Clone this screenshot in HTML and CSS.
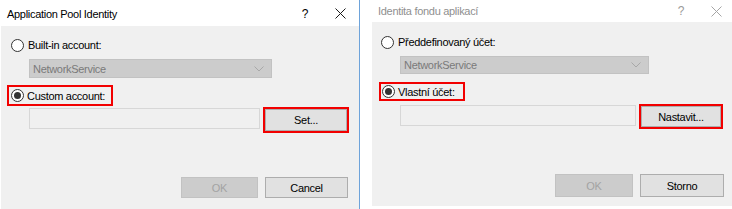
FILE: index.html
```html
<!DOCTYPE html>
<html lang="en">
<head>
<meta charset="utf-8">
<title>Application Pool Identity</title>
<link rel="stylesheet" href="styles.css">
</head>
<body>
<div class="screen">
  <section class="dialog dialog--en">
    <header class="titlebar">
      <span class="title">Application Pool Identity</span>
      <span class="help">?</span>
      <span class="close"><svg width="11" height="11" viewBox="0 0 11 11"><path d="M0.5 0.5 L10.5 10.5 M10.5 0.5 L0.5 10.5" /></svg></span>
    </header>
    <div class="body">
      <div class="option">
        <span class="radio"></span><span class="label">Built-in account:</span>
      </div>
      <div class="combo">
        <span class="combo-text">NetworkService</span>
        <svg class="chevron" width="10" height="6" viewBox="0 0 10 6"><path d="M0.5 0.5 L5 5 L9.5 0.5" /></svg>
      </div>
      <div class="option highlight">
        <span class="radio radio--checked"></span><span class="label">Custom account:</span>
      </div>
      <div class="account-row">
        <div class="textbox"></div>
        <div class="highlight highlight--btn"><button class="btn">Set...</button></div>
      </div>
      <div class="actions">
        <button class="btn btn--ok" disabled>OK</button>
        <button class="btn btn--cancel">Cancel</button>
      </div>
    </div>
  </section>
  <div class="divider"></div>
  <section class="dialog dialog--cs">
    <header class="titlebar">
      <span class="title">Identita fondu aplikací</span>
      <span class="help">?</span>
      <span class="close"><svg width="11" height="11" viewBox="0 0 11 11"><path d="M0.5 0.5 L10.5 10.5 M10.5 0.5 L0.5 10.5" /></svg></span>
    </header>
    <div class="body">
      <div class="option">
        <span class="radio"></span><span class="label">Předdefinovaný účet:</span>
      </div>
      <div class="combo">
        <span class="combo-text">NetworkService</span>
        <svg class="chevron" width="10" height="6" viewBox="0 0 10 6"><path d="M0.5 0.5 L5 5 L9.5 0.5" /></svg>
      </div>
      <div class="option highlight">
        <span class="radio radio--checked"></span><span class="label">Vlastní účet:</span>
      </div>
      <div class="account-row">
        <div class="textbox"></div>
        <div class="highlight highlight--btn"><button class="btn">Nastavit...</button></div>
      </div>
      <div class="actions">
        <button class="btn btn--ok" disabled>OK</button>
        <button class="btn btn--cancel">Storno</button>
      </div>
    </div>
  </section>
</div>
</body>
</html>
```

FILE: styles.css
```css
* { box-sizing: border-box; }

html, body {
  margin: 0;
  padding: 0;
  background: #ffffff;
}

body {
  font-family: "Liberation Sans", Arial, sans-serif;
  font-size: 11px;
  letter-spacing: -0.3px;
  color: #000;
  width: 732px;
  height: 209px;
  overflow: hidden;
}

.screen {
  display: flex;
  align-items: flex-start;
}

.dialog {
  display: flex;
  flex-direction: column;
  background: #ffffff;
}

.dialog--en {
  margin-left: 1px;
  width: 358px;
}

.dialog--cs {
  margin-left: 12px;
  width: 360px;
}

.divider {
  width: 1px;
  height: 209px;
  background: #6ea3da;
}

/* title bar */
.titlebar {
  display: flex;
  align-items: center;
  background: #ffffff;
}

.dialog--en .titlebar { height: 26px; padding-top: 1px; }
.dialog--cs .titlebar { height: 22px; }

.title {
  flex: 1;
  padding-left: 6px;
  white-space: nowrap;
}

.dialog--cs .title { color: #8f8f8f; }

.help {
  text-align: center;
  font-size: 12px;
}

.dialog--en .help { width: 32px; }
.dialog--cs .help { width: 38px; color: #9a9a9a; }

.close {
  display: flex;
  justify-content: center;
  align-items: center;
}

.dialog--en .close { width: 38px; }
.dialog--cs .close { width: 32px; }

.close svg path {
  stroke: #1a1a1a;
  stroke-width: 1;
  fill: none;
}

.dialog--cs .close svg path { stroke: #a5a5a5; }

/* body */
.body {
  display: flex;
  flex-direction: column;
  align-items: flex-start;
  background: #f0f0f0;
}

.dialog--en .body { height: 183px; padding-top: 11px; }
.dialog--cs .body { height: 184px; padding-top: 12px; }

.option {
  display: flex;
  align-items: center;
  height: 16px;
}

.dialog--en .option { padding-left: 10px; }
.dialog--cs .option { padding-left: 9px; }

.radio {
  width: 13px;
  height: 13px;
  border: 1px solid #333333;
  border-radius: 50%;
  background: #ffffff;
  display: flex;
  align-items: center;
  justify-content: center;
  flex: none;
}

.radio--checked::after {
  content: "";
  width: 7px;
  height: 7px;
  border-radius: 50%;
  background: #333333;
}

.label {
  margin-left: 4px;
  white-space: nowrap;
}

/* combobox */
.combo {
  display: flex;
  align-items: center;
  justify-content: space-between;
  margin-left: 28px;
  margin-top: 6px;
  background: #cccccc;
  border: 1px solid #c2c2c2;
  padding: 0 7px 0 3px;
  color: #7a7a7a;
}

.dialog--en .combo { width: 243px; height: 19px; }
.dialog--cs .combo { width: 249px; height: 18px; }

.chevron path {
  stroke: #a8a8a8;
  stroke-width: 1;
  fill: none;
}

/* highlights */
.highlight {
  border: 2px solid #f20000;
}

.option.highlight { padding-left: 2px; }
.option.highlight .label { margin-left: 3px; }

.dialog--en .option.highlight {
  margin-left: 6px;
  margin-top: 7px;
  width: 106px;
  height: 21px;
}

.dialog--cs .option.highlight {
  margin-left: 7px;
  margin-top: 8px;
  width: 86px;
  height: 19px;
  padding-left: 1px;
}

.account-row {
  display: flex;
  align-items: flex-start;
  margin-left: 28px;
}

.dialog--en .account-row { margin-top: 1px; }
.dialog--cs .account-row { margin-top: 3px; }

.textbox {
  margin-top: 1px;
  height: 21px;
  background: #f0f0f0;
  border: 1px solid #d7d7d7;
}

.dialog--en .textbox { width: 231px; }
.dialog--cs .textbox { width: 236px; }

.highlight--btn {
  margin-left: 3px;
  display: flex;
}

.dialog--en .highlight--btn { width: 86px; height: 26px; }
.dialog--cs .highlight--btn { width: 84px; height: 25px; }

.highlight--btn .btn {
  width: 100%;
  height: 100%;
}

/* buttons */
.btn {
  font-family: inherit;
  font-size: 11px;
  letter-spacing: -0.3px;
  color: #000;
  background: #e1e1e1;
  border: 1px solid #adadad;
  padding: 0;
  margin: 0;
  border-radius: 0;
}

.btn--ok[disabled] {
  background: #cccccc;
  border-color: #c2c2c2;
  color: #a3a3a3;
}

.actions {
  display: flex;
  gap: 7px;
}

.dialog--en .actions { margin-top: 44px; margin-left: 180px; }
.dialog--cs .actions { margin-top: 45px; margin-left: 183px; }

.dialog--en .btn--ok { width: 77px; height: 21px; }
.dialog--en .btn--cancel { width: 83px; height: 21px; }
.dialog--cs .btn--ok { width: 78px; height: 23px; }
.dialog--cs .btn--cancel { width: 84px; height: 23px; }
```
